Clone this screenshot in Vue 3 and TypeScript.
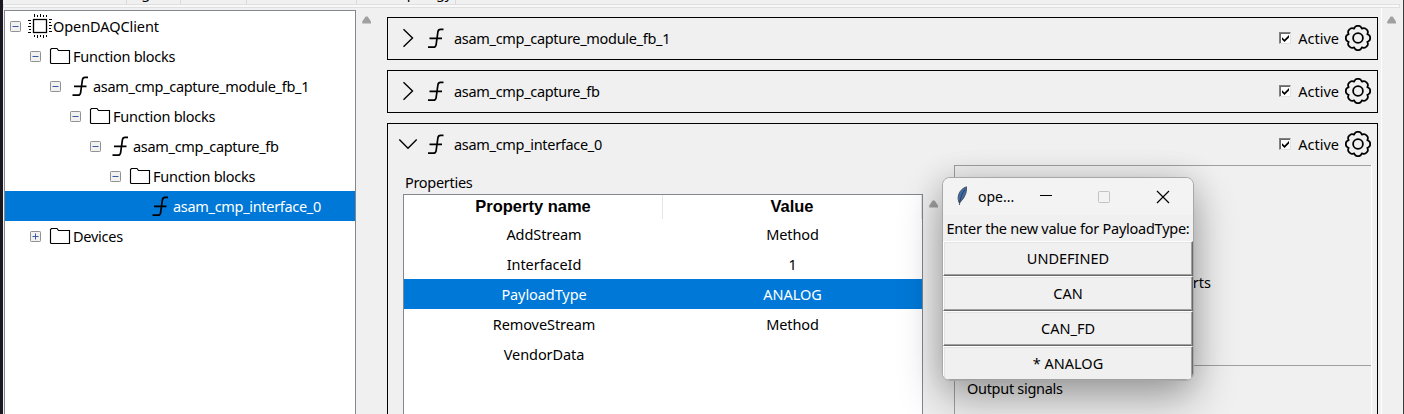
<script setup lang="ts">
interface TreeRow {
  label: string
  depth: number
  kind: 'chip' | 'folder' | 'func'
  toggle?: '-' | '+'
  selected?: boolean
}

const tree: TreeRow[] = [
  { label: 'OpenDAQClient', depth: 0, kind: 'chip', toggle: '-' },
  { label: 'Function blocks', depth: 1, kind: 'folder', toggle: '-' },
  { label: 'asam_cmp_capture_module_fb_1', depth: 2, kind: 'func', toggle: '-' },
  { label: 'Function blocks', depth: 3, kind: 'folder', toggle: '-' },
  { label: 'asam_cmp_capture_fb', depth: 4, kind: 'func', toggle: '-' },
  { label: 'Function blocks', depth: 5, kind: 'folder', toggle: '-' },
  { label: 'asam_cmp_interface_0', depth: 6, kind: 'func', selected: true },
  { label: 'Devices', depth: 1, kind: 'folder', toggle: '+' },
]

const blocks = [
  { name: 'asam_cmp_capture_module_fb_1', open: false },
  { name: 'asam_cmp_capture_fb', open: false },
  { name: 'asam_cmp_interface_0', open: true },
]

const properties = [
  { name: 'AddStream', value: 'Method' },
  { name: 'InterfaceId', value: '1' },
  { name: 'PayloadType', value: 'ANALOG', selected: true },
  { name: 'RemoveStream', value: 'Method' },
  { name: 'VendorData', value: '' },
]

const tabs = [
  { width: 124, text: '' },
  { width: 54, text: 'Signals' },
  { width: 66, text: '' },
  { width: 110, text: '' },
  { width: 99, text: 'Topology' },
]

const choices = ['UNDEFINED', 'CAN', 'CAN_FD', '* ANALOG']

// Outline of the eight-lobed settings gear, centred on (13, 13).
const lobes = 8
const gearPath = (() => {
  const pt = (r: number, a: number) =>
    `${(13 + r * Math.sin(a)).toFixed(2)} ${(13 - r * Math.cos(a)).toFixed(2)}`
  const step = (2 * Math.PI) / lobes
  let d = `M${pt(10.2, -step / 2)}`
  for (let i = 0; i < lobes; i++) {
    const a = i * step
    d += `C${pt(11.2, a - step * 0.36)} ${pt(12.8, a - step * 0.3)} ${pt(12.1, a)}`
    d += `C${pt(12.8, a + step * 0.3)} ${pt(11.2, a + step * 0.36)} ${pt(10.2, a + step / 2)}`
  }
  return d + 'Z'
})()
</script>

<template>
  <div class="window">
    <div class="tabs">
      <div v-for="(t, i) in tabs" :key="i" class="tab" :style="{ width: t.width + 'px' }">
        <span>{{ t.text }}</span>
      </div>
    </div>
    <div class="ridge"></div>
    <div class="body">
      <div class="tree">
        <div v-for="(r, i) in tree" :key="i" class="row" :class="{ selected: r.selected }"
          :style="{ paddingLeft: 5 + r.depth * 20 + 'px' }">
          <svg class="toggle" width="11" height="11">
            <g v-if="r.toggle">
              <rect x=".5" y=".5" width="10" height="10" rx=".8" fill="#f1f1f1" stroke="#919191" />
              <path d="M2.5 5.5h6" stroke="#3b5aa5" />
              <path v-if="r.toggle === '+'" d="M5.5 2.5v6" stroke="#3b5aa5" />
            </g>
          </svg>
          <svg v-if="r.kind === 'chip'" class="icon" width="24" height="24" fill="none" stroke="#000">
            <rect x="5.5" y="5.5" width="13" height="13" stroke-width="1.3" />
            <path d="M6.5 0v3M9.5 1v2M12.5 0v3M15.5 1v2M18.5 1v2M6.5 21v2M9.5 21v3M12.5 21v2M15.5 21v3M18.5 21v2M0 6.5h3M1 9.5h2M0 12.5h3M1 15.5h2M0 18.5h3M21 5.5h3M21 8.5h2M21 11.5h3M21 14.5h2M21 17.5h3" />
          </svg>
          <svg v-else-if="r.kind === 'folder'" class="icon" width="24" height="24" fill="none" stroke="#000">
            <path d="M2.5 19V5.5l1-1h5.5l1.5 2H21.5V19.5H3.2z" stroke-width="1.15" />
          </svg>
          <svg v-else class="icon" width="24" height="24" fill="none" stroke="#000" stroke-width="1.7">
            <path d="M20 3.3h-3q-2.2 0-2.6 2.5l-1.8 13q-.5 2.4-2.4 2.4H4.5M6 12.4h12.5" />
          </svg>
          <span class="label" :class="r.kind">{{ r.label }}</span>
        </div>
      </div>
      <div class="scroll left-scroll"><svg width="10" height="8"><path d="M.3 7.6V5.4L3.6.6h2L9 5.4v2.2z" fill="#a0a0a0" /></svg></div>
      <div class="blocks">
        <section v-for="b in blocks" :key="b.name" class="block" :class="{ open: b.open }">
          <header>
            <svg class="chevron" width="20" height="20" fill="none" stroke="#000" stroke-width="1.4">
              <path v-if="b.open" d="M1.3 5.5l8.7 8.7 8.7-8.7" />
              <path v-else d="M5.5 1.3l9 8.7-9 8.7" />
            </svg>
            <svg class="fn-icon" width="24" height="24" fill="none" stroke="#000" stroke-width="1.7">
              <path d="M20.5 3.3h-3q-2.2 0-2.6 2.5l-1.8 13q-.5 2.4-2.4 2.4H5M6.5 12.4H19" />
            </svg>
            <span class="name">{{ b.name }}</span>
            <span class="check"><svg width="9" height="9"><path d="M1 3.2v2.4L3.5 8 8 3.5V1L3.5 5.4z" /></svg></span>
            <span class="active">Active</span>
            <svg class="gear" width="26" height="26" fill="none" stroke="#000" stroke-width="1.8">
              <path :d="gearPath" />
              <circle cx="13" cy="13" r="4.9" />
            </svg>
          </header>
          <div v-if="b.open" class="details">
            <div class="props">
              <div class="caption">Properties</div>
              <div class="table">
                <div class="thead"><div>Property name</div><div>Value</div></div>
                <div v-for="p in properties" :key="p.name" class="trow" :class="{ selected: p.selected }">
                  <div>{{ p.name }}</div><div>{{ p.value }}</div>
                </div>
              </div>
            </div>
            <div class="scroll mid-scroll"><svg width="10" height="8"><path d="M.3 7.6V5.4L3.6.6h2L9 5.4v2.2z" fill="#a0a0a0" /></svg></div>
            <div class="ports">
              <div class="inputs"><span>ports</span></div>
              <div class="outputs">Output signals</div>
            </div>
          </div>
        </section>
      </div>
      <div class="scroll right-scroll"><svg width="10" height="8"><path d="M.3 7.6V5.4L3.6.6h2L9 5.4v2.2z" fill="#a0a0a0" /></svg></div>
    </div>

    <div class="dialog">
      <div class="titlebar">
        <svg class="feather" width="14" height="20">
          <path d="M11.5.8Q6 2.5 3.6 8.6 2.3 12.5 3.9 16.4l1 .2Q9.5 12 10.8 7.5 11.8 3.7 11.5.8z" fill="#3e6ca8" stroke="#444b55" stroke-width=".9" />
          <path d="M10 3.5Q5.5 9 4.4 19" fill="none" stroke="#26313f" stroke-width=".8" />
        </svg>
        <span class="title">ope...</span>
        <svg class="controls" width="140" height="16" fill="none" stroke="#000">
          <path d="M1 6.5h12" stroke-width="1.2" />
          <rect x="59.5" y="2.5" width="11" height="11" rx="1" stroke="#c2c2c2" />
          <path d="M118 2l12 12M130 2l-12 12" stroke-width="1.2" />
        </svg>
      </div>
      <div class="prompt">Enter the new value for PayloadType:</div>
      <button v-for="c in choices" :key="c" type="button">{{ c }}</button>
    </div>
  </div>
</template>

<style>
body {
  margin: 0;
  overflow: hidden;
}
</style>

<style scoped>
.window {
  position: relative;
  box-sizing: border-box;
  width: 1404px;
  height: 414px;
  overflow: hidden;
  background: #f0f0f0;
  border-left: 3px solid #1b191f;
  border-right: 1px solid #3c3c3c;
  font: 14.5px/20px "Noto Sans", "Open Sans", sans-serif;
  color: #000;
  display: flex;
  flex-direction: column;
}
.tabs {
  flex: none;
  display: flex;
  height: 4px;
  overflow: hidden;
}
.tab {
  box-sizing: border-box;
  border-right: 1px solid #d9d9d9;
  display: flex;
  align-items: flex-end;
  justify-content: flex-end;
  line-height: 20px;
}
.tab span {
  margin: 0 3px 2px 0;
  letter-spacing: -0.2px;
}
.ridge {
  box-sizing: border-box;
  flex: none;
  height: 4px;
  margin-right: 3px;
  border: 1px solid #dfdfdf;
  background: #f9f9f9;
}
.body {
  flex: 1;
  display: flex;
  min-height: 0;
}
.tree {
  box-sizing: border-box;
  width: 352px;
  height: 420px;
  margin: 2px 0 0 1px;
  border: 1px solid #828790;
  background: #fff;
  flex: none;
}
.row {
  display: flex;
  align-items: center;
  height: 30px;
  white-space: nowrap;
}
.toggle {
  flex: none;
  margin-right: 7px;
}
.icon {
  flex: none;
  margin-right: 1px;
}
.label.folder {
  letter-spacing: -0.25px;
}
.label.chip {
  letter-spacing: -0.08px;
}
.label.func,
.name {
  letter-spacing: -0.31px;
}
.selected {
  background: #0078d7;
  color: #fff;
}
.scroll {
  flex: none;
  display: flex;
  justify-content: center;
  align-items: flex-start;
}
.left-scroll {
  width: 21px;
  margin: 8px 10px 0 0;
}
.blocks {
  width: 991px;
  flex: none;
  padding-top: 9px;
}
.block {
  box-sizing: border-box;
  height: 43px;
  border: 1px solid #000;
  margin-bottom: 10px;
}
.block.open {
  height: 310px;
}
header {
  box-sizing: border-box;
  display: flex;
  align-items: center;
  height: 41px;
  padding-bottom: 1px;
}
.chevron {
  margin-left: 10px;
}
.fn-icon {
  margin-left: 5px;
}
.name {
  margin-left: 7px;
  flex: 1;
}
header .name,
header .active {
  padding-bottom: 1px;
}
.check {
  box-sizing: border-box;
  width: 12px;
  height: 12px;
  background: #fff;
  border: 1px solid;
  border-color: #808080 #e3e3e3 #e3e3e3 #808080;
  box-shadow: inset 1px 1px #696969;
  display: flex;
  align-items: center;
  justify-content: center;
}
.active {
  margin: 0 6px 0 7px;
}
.gear {
  margin-right: 6px;
}
.details {
  display: flex;
}
.props {
  width: 520px;
  margin: 7px 0 0 15px;
}
.caption {
  height: 22px;
  padding-left: 2px;
  letter-spacing: -0.3px;
}
.table {
  box-sizing: border-box;
  height: 260px;
  border: 1px solid #828790;
  background: #fff;
}
.thead,
.trow {
  display: grid;
  grid-template-columns: 259px 259px;
  text-align: center;
}
.thead {
  height: 24px;
  font: bold 16.5px/22px "Liberation Sans", Arial, sans-serif;
}
.thead div {
  box-sizing: border-box;
  border-right: 1px solid #e5e5e5;
}
.trow {
  height: 30px;
  line-height: 30px;
  letter-spacing: -0.08px;
}
.trow div:first-child {
  padding-left: 21px;
}
.mid-scroll {
  width: 21px;
  padding-top: 35px;
}
.ports {
  width: 416px;
  margin-left: 10px;
  border-left: 1px solid #a0a0a0;
  border-right: 1px solid #fff;
}
.inputs {
  height: 199px;
  border-top: 1px solid #a0a0a0;
  display: flex;
  align-items: center;
}
.inputs span {
  width: 256px;
  padding-top: 33px;
  text-align: right;
}
.outputs {
  border-top: 1px solid #a0a0a0;
  padding: 12px 12px;
  height: 60px;
  letter-spacing: -0.3px;
}
.right-scroll {
  box-sizing: border-box;
  width: 21px;
  margin-left: 3px;
  padding-top: 8px;
  border-left: 1px solid #fff;
}
.dialog {
  position: absolute;
  box-sizing: border-box;
  left: 939px;
  top: 177px;
  width: 252px;
  height: 204px;
  border: 1px solid #a8a8a8;
  border-radius: 8px;
  overflow: hidden;
  background: #f0f0f0;
  box-shadow: 0 18px 44px rgba(0, 0, 0, 0.32), 0 0 30px rgba(0, 0, 0, 0.12);
  display: flex;
  flex-direction: column;
}
.titlebar {
  flex: none;
  display: flex;
  align-items: center;
  height: 37px;
  background: #f3f3f3;
}
.feather {
  margin: 0 0 2px 12px;
}
.title {
  margin-left: 9px;
  width: 37px;
  font-size: 14px;
}
.controls {
  margin-left: 24px;
}
.prompt {
  flex: none;
  height: 26px;
  line-height: 26px;
  text-align: center;
  white-space: nowrap;
  letter-spacing: -0.25px;
}
button {
  flex: none;
  height: 35px;
  padding: 0 0 2px;
  font: inherit;
  color: inherit;
  background: #f0f0f0;
  border: 1px solid;
  border-color: #fff #696969 #696969 #fff;
  box-shadow: inset -1px -1px #a0a0a0, inset 1px 1px #e3e3e3;
}
</style>
